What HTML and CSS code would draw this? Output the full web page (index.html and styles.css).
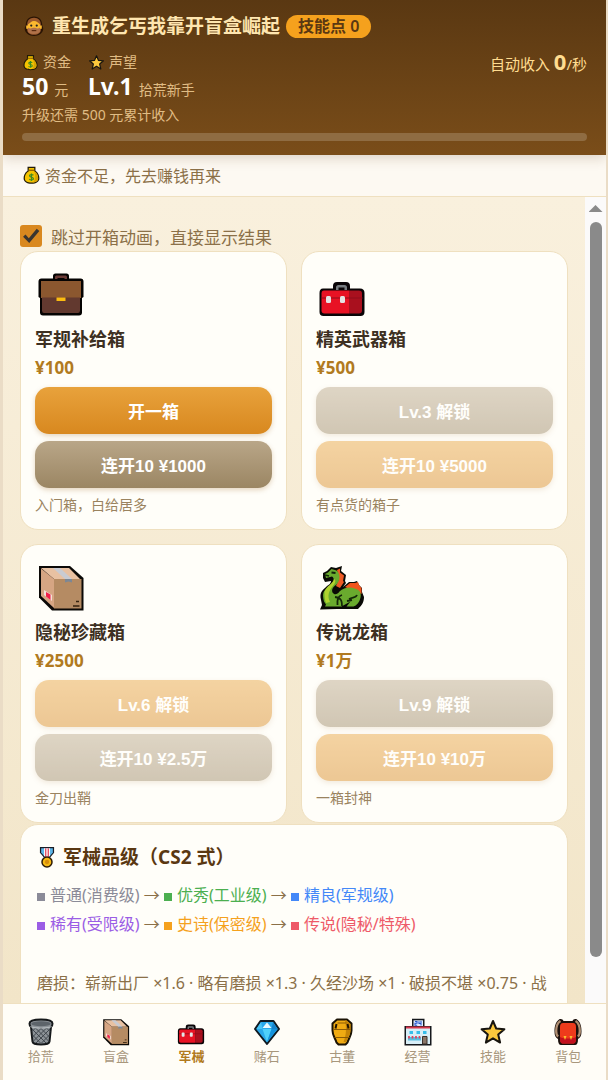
FILE: index.html
```html
<!DOCTYPE html>
<html lang="zh-CN">
<head>
  <meta charset="UTF-8">
  <meta name="viewport" content="width=device-width, initial-scale=1.0">
  <title>重生成乞丐我靠开盲盒崛起</title>
  <link rel="stylesheet" href="styles.css">
</head>
<body>
  <!-- Shared icons -->
  <svg class="sprite" aria-hidden="true">
    <symbol id="i-beard" viewBox="0 0 24 24">
      <path d="M12 1.500c6 0 9 4 9 9.500 0 2 1.500 2 1 5-.8 4-5 6.800-10 6.800S2.800 20 2 16c-.5-3 1-3 1-5 0-5.500 3-9.500 9-9.500z" fill="#2a1404"/>
      <path d="M12 3c5 0 7.500 3.300 7.500 8v5c0 3-3 5.500-7.500 5.500S4.500 19 4.500 16v-5C4.500 6.300 7 3 12 3z" fill="#9c5a2c"/>
      <path d="M5.500 10C8 9 9 6.500 12 6.500s5 2.500 6.500 3.500V16h-13z" fill="#fbb92f"/>
      <path d="M3.500 11.500H6V15H3.500zM18 11.500h2.500V15H18z" fill="#fbb92f"/>
      <circle cx="9" cy="11.500" r="1.200" fill="#222"/><circle cx="15" cy="11.500" r="1.200" fill="#222"/>
      <path d="M5.500 14c3 1.500 4.500 0 6.500 0s3.500 1.500 6.500 0V18c-1 3-12 4-13 0z" fill="#b0724a"/>
      <path d="M9.500 17h5" stroke="#5a2b10" stroke-width="1.300"/>
    </symbol>
    <symbol id="i-money" viewBox="0 0 24 24">
      <path d="M7 1.500h10v5.200c3.500 2.500 5 6 5 9.300 0 4.500-4 7-10 7S2 20.500 2 16c0-3.300 1.500-6.800 5-9.300z" fill="#221b08"/>
      <path d="M8.600 3h6.800v4.300c3.300 2 5 5.200 5 8.700 0 3.700-3.400 5.500-8.400 5.500S3.600 19.700 3.600 16c0-3.500 1.700-6.700 5-8.700z" fill="#f5c400"/>
      <path d="M15.400 7.300c3.300 2 5 5.200 5 8.700 0 3.700-3.400 5.500-7 5.500 4-3 4-9 2-14.200z" fill="#d9a300"/>
      <path d="M8 6h8" stroke="#8a5a00" stroke-width="1.500"/>
      <path d="M14.500 12.300c-1-1.300-5-1.200-5 .8 0 2.200 5 1.300 5 3.500 0 2-4 2.200-5.300.7M12 10v9.500" fill="none" stroke="#3d8a24" stroke-width="1.500"/>
    </symbol>
    <symbol id="i-star" viewBox="0 0 28 28">
      <path d="M14 3l3.200 7.500 8.200.7-6.200 5.400 1.900 8-7.100-4.300-7.100 4.300 1.900-8-6.200-5.400 8.200-.7z" fill="#fcc83d" stroke="#17140f" stroke-width="2" stroke-linejoin="round"/>
    </symbol>
    <symbol id="i-briefcase" viewBox="0 0 48 48">
      <path d="M4.500 7.500H16V5q0-2.500 2.500-2.500h11Q32 2.500 32 5v2.500h11.500q3 0 3 3V26l-1.500 1v14.500q0 3-3 3H6q-3 0-3-3V27l-1.500-1V10.500q0-3 3-3z" fill="#050302"/>
      <path d="M18 8V6q0-1.500 1.500-1.500h9Q30 4.500 30 6v2h-2.500V7h-7v1z" fill="#6b3b36"/>
      <path d="M4 10h40v17H4z" fill="#8b572f"/>
      <path d="M5 26.500h38v13q0 2.500-2 2.500H7q-2 0-2-2.500z" fill="#62392f"/>
      <path d="M19.500 26.500h9v3.500h-9z" fill="#fbbb10"/>
    </symbol>
    <symbol id="i-toolbox" viewBox="0 0 48 48">
      <path d="M5 17.500h10V15q0-4 4-4h9q4 0 4 4v2.500h10q4.500 0 4.500 4.500v19q0 4-4 4H5.500q-4 0-4-4V22q0-4.500 3.500-4.500z" fill="#0a0507"/>
      <path d="M18 19v-2.500q0-2.500 2.500-2.500h6q2.500 0 2.500 2.500V19h-2.500v-2.500h-6V19z" fill="#777c80"/>
      <path d="M6 19.500h25v23H6.500q-3 0-3-3V22.500q0-3 2.500-3z" fill="#e81224"/>
      <path d="M31 19.500h10q3 0 3 3v17q0 3-3 3H31z" fill="#a9101e"/>
      <path d="M3.500 27h41" stroke="#8f0c1a" stroke-width="1.200"/>
      <rect x="8" y="25" width="5" height="7" rx="1.500" fill="#e4e4e4"/>
      <rect x="22" y="25" width="5" height="7" rx="1.500" fill="#e4e4e4"/>
    </symbol>
    <symbol id="i-box" viewBox="0 0 48 48">
      <path d="M2 2h31l13.500 12v32.500H15L2 33.500z" fill="#0b0907"/>
      <path d="M4 4h28l11 11H17z" fill="#e8c1a2"/>
      <path d="M4 4.500L17 15v29L4 32z" fill="#d6a583"/>
      <path d="M17 15h27.500v29.500H17z" fill="#b58b63"/>
      <path d="M16 4h7l12 11h-7z" fill="#c9cbd2"/>
      <path d="M28 15h7v3.500l-3.500-1-3.500 1z" fill="#7c8795"/>
      <path d="M7 26l8 5v6l-8-6z" fill="#f3dfd8"/>
      <path d="M9 28l4.500 2.500V36L9 32.500z" fill="#f0204a"/>
      <path d="M39 37.500h3M36 42h6.500" stroke="#35220f" stroke-width="1.500"/>
    </symbol>
    <symbol id="i-dragon" viewBox="0 0 48 48">
      <path d="M5 9l4-2 4-4 5 1 6-2-1 5 5 4-1 6 1 2-3 4 6-5h5l3-1 2 4 3 3v4l2 5c0 6-3 9-6 12H19l-17 .5 2-4.500-1-5c-2-8 2-10 6-14 2-1 4-3 4-5l-6 1-2-4z" fill="#0a0a06"/>
      <path d="M19 6l3-1.500v4l4 3-1 5.500 1 1-4 6-4-2 3-7z" fill="#ee5a24"/>
      <path d="M27 23l5-4h5l3-1 1 3 2.500 3v6z" fill="#f2551d"/>
      <path d="M7 10l3-1.500L13.500 5l5 1.500c4 3 4 10 0 14-4 3-5 5-4 8 2 3 5 2 7-1 4-4 11-5 15-3 5 1 7 4 6 9-1 5-4 8-7 9h-7l4-5-9 5H7l1-2-2-3c-2-8-1-11 5-15 5-4 6-8 3-10L8 14z" fill="#6aab2e"/>
      <path d="M16 15c-1 5-8 7-9.500 13 0 4 0 7 1.500 11l4-1c-3-6-1-11 2-15 4-4 4-7 2-8z" fill="#b0d32e"/>
      <path d="M24 31c-4 1-5 5-4.500 10M31 35c4-2 7-1 8-4M17 33c7 1 7 5 7 9M29 37l5-1M7 11l4 1" fill="none" stroke="#142808" stroke-width="1.800"/>
      <path d="M13.500 8.500l4 .5" stroke="#10220a" stroke-width="2"/>
    </symbol>
    <symbol id="i-medal" viewBox="0 0 24 28">
      <path d="M3.500 2h17v7L15 15.500H9L3.500 9z" fill="#1b1d25"/>
      <path d="M5 3.500h14v5l-4.500 5.500h-5L5 8.500z" fill="#5cb5e8"/>
      <path d="M8.500 3.500h7V12L14 14h-4l-1.500-2z" fill="#fff"/>
      <path d="M9.800 3.500h1.400V14H9.800zM12.800 3.500h1.400V14h-1.400z" fill="#e0334a"/>
      <circle cx="12" cy="20" r="6" fill="#f6b914" stroke="#2e1c05" stroke-width="1.800"/>
      <circle cx="12" cy="20" r="2.600" fill="#d78d0b"/>
    </symbol>
    <symbol id="i-basket" viewBox="0 0 28 28">
      <path d="M2.500 5.500C2.500 3 7 1.500 14 1.500S25.500 3 25.500 5.500c0 1.500-.5 3-1.500 3.500l-1.500 14.500c-.3 2-4 3-8.500 3s-8.200-1-8.500-3L4 9C3 8.500 2.500 7 2.500 5.500z" fill="#8c9297" stroke="#15181a" stroke-width="2"/>
      <ellipse cx="14" cy="5.800" rx="9.800" ry="2.500" fill="#5d646a"/>
      <path d="M5 11l14 14M8 9.500l14 14M13 9.500l9.500 9.500M19 9.500l4 4M5.500 17l8 8M23 11L9 25M20 9.500l-14 14M15 9.500L5.500 19M9 9.500l-4 4M22.500 17l-8 8" stroke="#40474d" stroke-width="1"/>
      <path d="M3.500 8.500c4 2 17 2 21 0" fill="none" stroke="#b4babd" stroke-width="1.200"/>
    </symbol>
    <symbol id="i-gem" viewBox="0 0 28 28">
      <path d="M7.500 3h13L26 11 14 26 2 11z" fill="#29a8ec" stroke="#101a22" stroke-width="2" stroke-linejoin="round"/>
      <path d="M8 4l1.500 7H3.500z" fill="#49c6f7"/>
      <path d="M20 4l-1.500 7h6z" fill="#1684ce"/>
      <path d="M9.500 11h9L14 24z" fill="#4fd0fb"/>
      <path d="M18.500 11h6L14 24z" fill="#1593dd"/>
      <path d="M14 4.500l4.500 5.500h-9z" fill="#e9faff"/>
    </symbol>
    <symbol id="i-vase" viewBox="0 0 28 28">
      <path d="M9 1.500h10l4.500 4v7c0 5-2.500 7-4 12l-2 2h-7l-2-2c-1.500-5-4-7-4-12v-7z" fill="#f0ab12" stroke="#1b1304" stroke-width="2" stroke-linejoin="round"/>
      <path d="M17 2.500h1.500l4 3.500v6c0 5-2.500 7-4 12h-3c3-7 3-15 1.500-21.500z" fill="#c58407"/>
      <path d="M5.500 11.500h17M6.500 19.500h15M9.500 5h9" stroke="#8a5a05" stroke-width="1"/>
      <path d="M8.500 6l-1 4.500M19.500 6l1 4.500" stroke="#201403" stroke-width="2"/>
    </symbol>
    <symbol id="i-store" viewBox="0 0 28 28">
      <path d="M.5 8H8V.8h12.500V8h7v19.500H.5z" fill="#16181c"/>
      <path d="M9.500 2.300H19V8H9.500z" fill="#dfeaff"/>
      <path d="M11 3.500h2v1.800h-2v2h2.200M15 3.200v2.300h2.500M17 3v4.500" fill="none" stroke="#2555c9" stroke-width="1.100"/>
      <path d="M2 9.500h24V26H2z" fill="#d9eef6"/>
      <path d="M2 8.500h24v2H2z" fill="#d6354a"/>
      <path d="M5.500 13h3.500v3H5.500zM12.500 13h3.500v3h-3.500zM19 13h3.500v3H19z" fill="#35bde9"/>
      <path d="M4 19h13v3.500H4z" fill="#58bfe0"/>
      <path d="M5 18v2.500M8.500 18v2.500M12 18v2.500M15.500 18v2.500" stroke="#e0405a" stroke-width="1.700"/>
      <path d="M18.500 18.500h4.500V26h-4.500z" fill="#8a7566" stroke="#3b302a"/>
    </symbol>
    <symbol id="i-backpack" viewBox="0 0 28 28">
      <path d="M5 1.500c2-1 4 0 4.500 1.500h9c.5-1.500 2.500-2.500 4.500-1.500 4 3 4.500 8 4.500 12 0 4-1 6-3.500 7.500 0 4-1 6-3 6H7c-2 0-3-2-3-6C1.500 19.500.5 17.500.5 13.500c0-4 .5-9 4.500-12z" fill="#1c100c"/>
      <path d="M6.500 3C3 5 2.200 9 2.200 13c0 3 .5 4.500 2 5.500M21.500 3c3.500 2 4.300 6 4.300 10 0 3-.5 4.500-2 5.500" fill="none" stroke="#b08f72" stroke-width="2.300"/>
      <path d="M9 5h10c2 0 3 1.500 3 4v11c0 4-1 5.500-3 5.500H9c-2 0-3-1.500-3-5.500V9c0-2.500 1-4 3-4z" fill="#ee3b1c"/>
      <path d="M6 19c4 2 12 2 16 0v2c0 3-1 4.500-3 4.500H9c-2 0-3-1.500-3-4.500z" fill="#c2101e"/>
      <path d="M9.500 18h3L11 22zM15.500 18h3L17 22z" fill="#fbc02d"/>
    </symbol>
  </svg>

  <div class="app">
    <header class="header">
      <div class="title-row">
        <svg class="icon-title"><use href="#i-beard"/></svg>
        <h1 class="title">重生成乞丐我靠开盲盒崛起</h1>
        <span class="badge">技能点 0</span>
      </div>
      <div class="stats">
        <div class="stat">
          <div class="stat-label"><svg class="icon-sm"><use href="#i-money"/></svg>资金</div>
          <div class="stat-value">50 <small>元</small></div>
        </div>
        <div class="stat">
          <div class="stat-label"><svg class="icon-sm"><use href="#i-star"/></svg>声望</div>
          <div class="stat-value">Lv.1 <small class="rank">拾荒新手</small></div>
        </div>
        <div class="income">自动收入 <b>0</b>/秒</div>
      </div>
      <div class="level-text">升级还需 500 元累计收入</div>
      <div class="level-bar"></div>
    </header>

    <div class="message"><svg class="icon-msg"><use href="#i-money"/></svg>资金不足，先去赚钱再来</div>

    <div class="body-row">
      <main class="content">
        <label class="skip"><input type="checkbox" class="skip-box" checked>跳过开箱动画，直接显示结果</label>

        <div class="case-grid">
          <section class="card case">
            <svg class="case-icon"><use href="#i-briefcase"/></svg>
            <h2 class="case-name">军规补给箱</h2>
            <p class="case-price">¥100</p>
            <button class="btn">开一箱</button>
            <button class="btn btn-gray">连开10 ¥1000</button>
            <p class="case-note">入门箱，白给居多</p>
          </section>
          <section class="card case">
            <svg class="case-icon"><use href="#i-toolbox"/></svg>
            <h2 class="case-name">精英武器箱</h2>
            <p class="case-price">¥500</p>
            <button class="btn btn-gray" disabled>Lv.3 解锁</button>
            <button class="btn" disabled>连开10 ¥5000</button>
            <p class="case-note">有点货的箱子</p>
          </section>
          <section class="card case">
            <svg class="case-icon"><use href="#i-box"/></svg>
            <h2 class="case-name">隐秘珍藏箱</h2>
            <p class="case-price">¥2500</p>
            <button class="btn" disabled>Lv.6 解锁</button>
            <button class="btn btn-gray" disabled>连开10 ¥2.5万</button>
            <p class="case-note">金刀出鞘</p>
          </section>
          <section class="card case">
            <svg class="case-icon"><use href="#i-dragon"/></svg>
            <h2 class="case-name">传说龙箱</h2>
            <p class="case-price">¥1万</p>
            <button class="btn btn-gray" disabled>Lv.9 解锁</button>
            <button class="btn" disabled>连开10 ¥10万</button>
            <p class="case-note">一箱封神</p>
          </section>
        </div>

        <section class="card grades">
          <h2 class="grades-title"><svg class="icon-medal"><use href="#i-medal"/></svg>军械品级（CS2 式）</h2>
          <p class="grades-text">
            <span class="grade common">普通(消费级)</span> → <span class="grade fine">优秀(工业级)</span> → <span class="grade superior">精良(军规级)</span><br>
            <span class="grade rare">稀有(受限级)</span> → <span class="grade epic">史诗(保密级)</span> → <span class="grade legend">传说(隐秘/特殊)</span>
          </p>
          <p class="grades-text wear">磨损：崭新出厂 ×1.6 · 略有磨损 ×1.3 · 久经沙场 ×1 · 破损不堪 ×0.75 · 战痕累累 ×0.5</p>
        </section>
      </main>
      <div class="scrollbar">
        <div class="scroll-up"></div>
        <div class="scroll-thumb"></div>
      </div>
    </div>

    <nav class="tabs">
      <button class="tab"><svg class="tab-icon"><use href="#i-basket"/></svg>拾荒</button>
      <button class="tab"><svg class="tab-icon"><use href="#i-box"/></svg>盲盒</button>
      <button class="tab active"><svg class="tab-icon"><use href="#i-toolbox"/></svg>军械</button>
      <button class="tab"><svg class="tab-icon"><use href="#i-gem"/></svg>赌石</button>
      <button class="tab"><svg class="tab-icon"><use href="#i-vase"/></svg>古董</button>
      <button class="tab"><svg class="tab-icon"><use href="#i-store"/></svg>经营</button>
      <button class="tab"><svg class="tab-icon"><use href="#i-star"/></svg>技能</button>
      <button class="tab"><svg class="tab-icon"><use href="#i-backpack"/></svg>背包</button>
    </nav>
  </div>
</body>
</html>
```
FILE: styles.css
```css
:root {
  --brown: #5a3812;
  --gold: #b17a20;
  --text: #3d3022;
  --muted: #8b7048;
  --paper: #fffef9;
  --line: #efe0c0;
}
* {
  box-sizing: border-box;
}
body {
  margin: 0;
  padding: 0 2px 0 3px;
  background: #eadcc6;
  font-family: "Noto Sans", "Noto Sans CJK SC", sans-serif;
  color: var(--text);
}
h1, h2, p {
  margin: 0;
}
svg {
  display: block;
  flex: none;
}
.sprite {
  position: absolute;
  width: 0;
  height: 0;
}
.app {
  display: flex;
  flex-direction: column;
  height: 100vh;
  overflow: hidden;
}

/* Header */
.header {
  position: relative;
  z-index: 1;
  padding: 14px 19px;
  background: linear-gradient(#5a3812, #7a4d19);
  box-shadow: 0 3px 12px rgba(90, 56, 18, 0.2);
  color: #e0bc84;
}
.title-row {
  display: flex;
  align-items: center;
  gap: 6px;
  height: 24px;
}
.icon-title {
  width: 24px;
  height: 22px;
}
.title {
  font-size: 19px;
  line-height: 24px;
  color: #ffe6b0;
}
.badge {
  padding: 0 12px;
  border-radius: 12px;
  background: #f5a11d;
  color: #5a3812;
  font-size: 16px;
  font-weight: 600;
  line-height: 23px;
}
.stats {
  display: flex;
  gap: 17px;
  margin-top: 13px;
}
.stat-label {
  display: flex;
  align-items: center;
  gap: 4px;
  font-size: 14px;
  line-height: 22px;
}
.icon-sm {
  width: 17px;
  height: 17px;
}
.stat-value {
  height: 28px;
  font-size: 23px;
  font-weight: 700;
  line-height: 26px;
  color: #fff;
}
.stat-value small {
  font-size: 14px;
  font-weight: 400;
  color: #e0bc84;
}
.income {
  margin-left: auto;
  font-size: 15px;
  line-height: 20px;
  color: #ffdc90;
}
.income b {
  font-size: 22px;
}
.level-text {
  margin-top: 4px;
  font-size: 14px;
  line-height: 20px;
}
.level-bar {
  height: 8px;
  margin-top: 8px;
  border-radius: 4px;
  background: #8f6c42;
}
.message {
  display: flex;
  align-items: center;
  gap: 4px;
  height: 42px;
  padding: 0 19px 2px;
  border-bottom: 1px solid var(--line);
  background: #fdf9f2;
  color: var(--muted);
  font-size: 16px;
}
.icon-msg {
  width: 19px;
  height: 20px;
}

/* Content */
.body-row {
  display: flex;
  flex: 1;
  min-height: 0;
}
.content {
  flex: 1;
  min-width: 0;
  padding: 24px 17px 24px;
  overflow-y: auto;
  scrollbar-width: none;
  background: linear-gradient(#f9f0dd, #f2e5c8);
}
.skip {
  display: flex;
  align-items: center;
  gap: 9px;
  height: 30px;
  color: var(--muted);
  font-size: 17px;
}
.skip-box {
  appearance: none;
  width: 22px;
  height: 22px;
  margin: 0;
  border-radius: 3px;
  background: #d9881f;
}
.skip-box:checked::before {
  content: "";
  display: block;
  height: 22px;
  background: #3a3530;
  clip-path: polygon(14% 53%, 25% 43%, 40% 60%, 76% 17%, 88% 27%, 42% 82%);
}
.case-grid {
  display: grid;
  grid-template-columns: 1fr 1fr;
  gap: 14px;
}
.card {
  border: 1px solid var(--line);
  border-radius: 18px;
  background: var(--paper);
}
.case {
  padding: 14px;
}
.case-icon {
  width: 48px;
  height: 48px;
  margin: 5px 2px 7px;
}
.case-name {
  font-size: 18px;
  line-height: 26px;
}
.case-price {
  margin-bottom: 4px;
  color: var(--gold);
  font-size: 17px;
  font-weight: 700;
  line-height: 31px;
}
.btn {
  display: block;
  width: 100%;
  height: 47px;
  margin-bottom: 7px;
  border: none;
  border-radius: 14px;
  background: linear-gradient(#e8a23c, #d8881f);
  box-shadow: 0 2px 5px rgba(150, 90, 20, 0.25);
  color: #fff;
  font-family: "Liberation Sans", "Noto Sans CJK SC", sans-serif;
  font-size: 17px;
  font-weight: 700;
  cursor: pointer;
}
.btn-gray {
  background: linear-gradient(#b9a688, #9b8663);
}
.btn:disabled {
  opacity: 0.46;
  cursor: default;
}
.case-note {
  color: #9a835f;
  font-size: 14px;
  line-height: 20px;
}

/* Grades */
.grades {
  margin-top: 1px;
  padding: 16px;
}
.grades-title {
  display: flex;
  align-items: center;
  gap: 6px;
  margin-bottom: 8px;
  color: var(--brown);
  font-size: 19px;
  line-height: 32px;
}
.icon-medal {
  width: 20px;
  height: 24px;
}
.grades-text {
  color: var(--muted);
  font-size: 16px;
  line-height: 29px;
}
.wear {
  margin-top: 30px;
}
.grade::before {
  content: "";
  display: inline-block;
  width: 8px;
  height: 8px;
  margin-right: 5px;
  background: currentColor;
}
.common { color: #8b8b98; }
.fine { color: #4caf50; }
.superior { color: #4488f8; }
.rare { color: #9b5de5; }
.epic { color: #f5a11d; }
.legend { color: #ee5a68; }

/* Scrollbar */
.scrollbar {
  display: flex;
  flex-direction: column;
  align-items: center;
  width: 21px;
  padding: 8px 0 46px;
  background: #fbfafa;
}
.scroll-up {
  width: 14px;
  height: 7px;
  margin-bottom: 10px;
  background: #8a8a8a;
  clip-path: polygon(50% 0, 100% 100%, 0 100%);
}
.scroll-thumb {
  flex: 1;
  width: 12px;
  border-radius: 6px;
  background: #8a8a8a;
}

/* Bottom tabs */
.tabs {
  display: flex;
  padding: 14px 0 13px;
  border-top: 1px solid var(--line);
  background: #fffdf7;
}
.tab {
  display: flex;
  flex: 1;
  flex-direction: column;
  align-items: center;
  padding: 0;
  border: none;
  background: none;
  color: #a8977c;
  font-family: inherit;
  font-size: 13px;
  line-height: 21px;
  cursor: pointer;
}
.tab-icon {
  width: 28px;
  height: 28px;
}
.tab.active {
  color: var(--gold);
  font-weight: 700;
}
```
